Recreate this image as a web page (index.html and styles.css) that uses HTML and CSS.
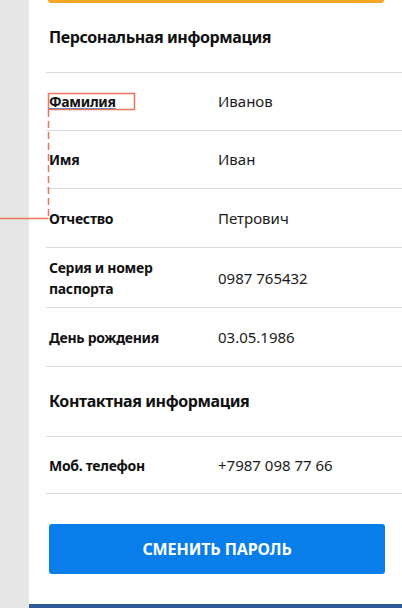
FILE: index.html
```html
<!DOCTYPE html>
<html lang="ru">
<head>
<meta charset="utf-8">
<link rel="stylesheet" href="styles.css">
</head>
<body>
<div class="page">
  <div class="side"></div>
  <div class="main">
    <div class="topbar"></div>
    <h2 class="section-title">Персональная информация</h2>
    <div class="row"><div class="label first">Фамилия</div><div class="value">Иванов</div></div>
    <div class="row"><div class="label">Имя</div><div class="value">Иван</div></div>
    <div class="row r59"><div class="label">Отчество</div><div class="value">Петрович</div></div>
    <div class="row tall"><div class="label">Серия и номер<br>паспорта</div><div class="value">0987 765432</div></div>
    <div class="row r59"><div class="label">День рождения</div><div class="value">03.05.1986</div></div>
    <h2 class="section-title">Контактная информация</h2>
    <div class="row r57"><div class="label">Моб. телефон</div><div class="value">+7987 098 77 66</div></div>
    <div class="actions"><button class="btn">СМЕНИТЬ ПАРОЛЬ</button></div>
    <div class="footer"></div>
  </div>
</div>
<svg class="annot" width="402" height="608" viewBox="0 0 402 608">
  <rect x="48.5" y="93.5" width="86" height="16" fill="none" stroke="#e8765a" stroke-width="1.5"/>
  <line x1="48.5" y1="110" x2="48.5" y2="218" stroke="#e8765a" stroke-width="1.5" stroke-dasharray="7 4"/>
  <line x1="0" y1="218.5" x2="48.5" y2="218.5" stroke="#e8765a" stroke-width="1.3"/>
</svg>
</body>
</html>
```
FILE: styles.css
```css
* { box-sizing: border-box; }
html, body { margin: 0; padding: 0; }
body {
  width: 402px;
  height: 608px;
  overflow: hidden;
  font-family: "Noto Sans", "Open Sans", sans-serif;
  color: #111;
  position: relative;
}
.page { display: flex; height: 608px; }
.side { width: 29px; background: #e6e6e6; flex: none; }
.main {
  flex: 1;
  background: #fff;
  display: flex;
  flex-direction: column;
}
.topbar {
  height: 3px;
  margin: 0 18px 0 19px;
  background: #f5a623;
  border-radius: 0 0 3px 3px;
}
.section-title {
  margin: 0 0 0 17px;
  height: 70px;
  padding: 0 0 1px 3px;
  display: flex;
  align-items: center;
  font-size: 16px;
  font-weight: 700;
  letter-spacing: -0.4px;
  border-bottom: 1px solid #dcdcdc;
}
.row {
  margin-left: 17px;
  min-height: 58px;
  display: flex;
  align-items: center;
  border-bottom: 1px solid #dcdcdc;
  padding-left: 3px;
}
.row.r59 { min-height: 59px; }
.row.r57 { min-height: 57px; }
.row.tall { min-height: 60px; padding-top: 1px; }
.label {
  width: 169px;
  flex: none;
  font-size: 14px;
  font-weight: 700;
  line-height: 21px;
  letter-spacing: -0.3px;
}
.label.first {
  text-decoration: underline;
  text-decoration-color: #3b8ad9;
  text-decoration-thickness: 2px;
  text-underline-offset: 1px;
}
.value {
  font-size: 15px;
  font-weight: 400;
  line-height: 21px;
  color: #1a1a1a;
}
.actions {
  padding: 30px 17px 0 20px;
  height: 110px;
}
.btn {
  width: 336px;
  height: 50px;
  border: none;
  border-radius: 3px;
  background: #087eeb;
  color: #fff;
  font-family: "Noto Sans", "Open Sans", sans-serif;
  font-size: 16px;
  font-weight: 700;
  letter-spacing: -0.1px;
}
.footer {
  height: 4px;
  background: #2d5c99;
  margin-top: auto;
}
.annot { position: absolute; left: 0; top: 0; pointer-events: none; }
```
